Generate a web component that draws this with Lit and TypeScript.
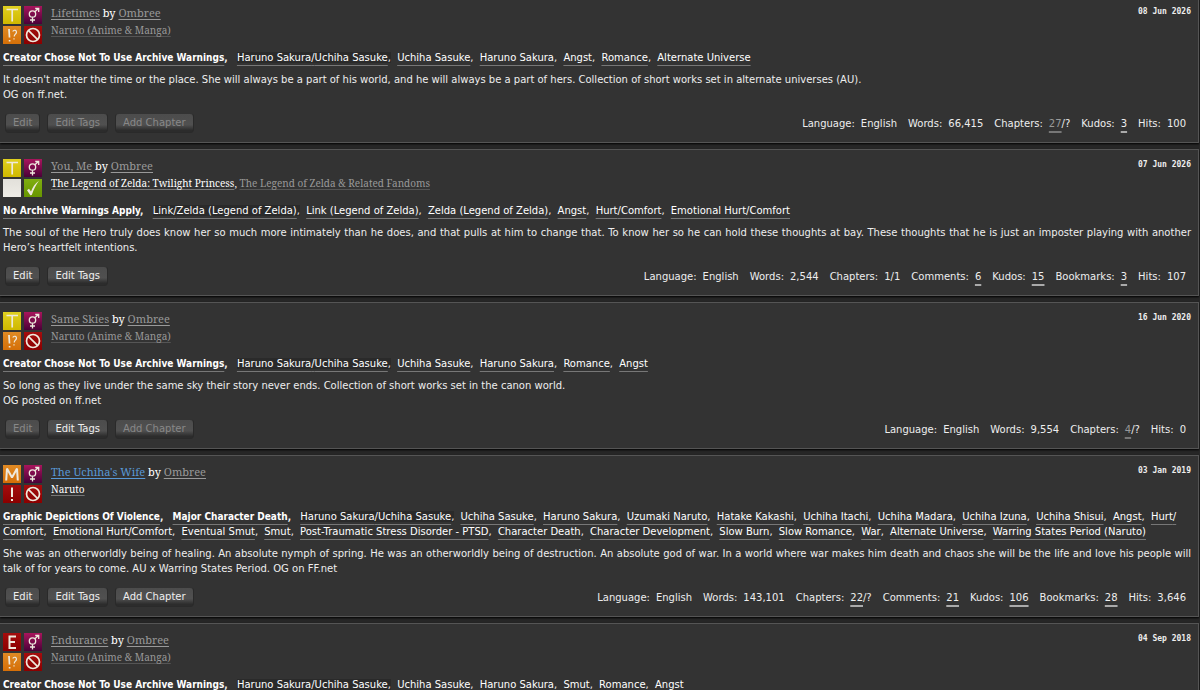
import { LitElement, html, svg, css, nothing } from 'lit';
import { customElement, property } from 'lit/decorators.js';
import { classMap } from 'lit/directives/class-map.js';

type Symbol = 'teen' | 'mature' | 'explicit' | 'het' | 'choose' | 'warn' | 'none' | 'wip' | 'done';

interface Link {
  text: string;
  fresh?: boolean;
}

interface Work {
  title: string;
  active?: boolean;
  date: string;
  symbols: Symbol[];
  fandoms: Link[];
  warnings: string[];
  pairings: string[];
  tags: string[];
  summary: string[];
  actions: Link[];
  stats: { label: string; value: string; link?: string; seen?: boolean }[];
}

const SASUSAKU = 'Haruno Sakura/Uchiha Sasuke';

const works: Work[] = [
  {
    title: 'Lifetimes',
    date: '08 Jun 2026',
    symbols: ['teen', 'het', 'choose', 'wip'],
    fandoms: [{ text: 'Naruto (Anime & Manga)' }],
    warnings: ['Creator Chose Not To Use Archive Warnings'],
    pairings: [SASUSAKU],
    tags: ['Uchiha Sasuke', 'Haruno Sakura', 'Angst', 'Romance', 'Alternate Universe'],
    summary: [
      "It doesn't matter the time or the place. She will always be a part of his world, and he will always be a part of hers. Collection of short works set in alternate universes (AU).",
      'OG on ff.net.',
    ],
    actions: [{ text: 'Edit' }, { text: 'Edit Tags' }, { text: 'Add Chapter' }],
    stats: [
      { label: 'Language', value: 'English' },
      { label: 'Words', value: '66,415' },
      { label: 'Chapters', link: '27', value: '/?', seen: true },
      { label: 'Kudos', link: '3', value: '' },
      { label: 'Hits', value: '100' },
    ],
  },
  {
    title: 'You, Me',
    date: '07 Jun 2026',
    symbols: ['teen', 'het', 'none', 'done'],
    fandoms: [
      { text: 'The Legend of Zelda: Twilight Princess', fresh: true },
      { text: 'The Legend of Zelda & Related Fandoms' },
    ],
    warnings: ['No Archive Warnings Apply'],
    pairings: ['Link/Zelda (Legend of Zelda)'],
    tags: ['Link (Legend of Zelda)', 'Zelda (Legend of Zelda)', 'Angst', 'Hurt/Comfort', 'Emotional Hurt/Comfort'],
    summary: [
      'The soul of the Hero truly does know her so much more intimately than he does, and that pulls at him to change that. To know her so he can hold these thoughts at bay. These thoughts that he is just an imposter playing with another Hero’s heartfelt intentions.',
    ],
    actions: [{ text: 'Edit', fresh: true }, { text: 'Edit Tags', fresh: true }],
    stats: [
      { label: 'Language', value: 'English' },
      { label: 'Words', value: '2,544' },
      { label: 'Chapters', value: '1/1' },
      { label: 'Comments', link: '6', value: '' },
      { label: 'Kudos', link: '15', value: '' },
      { label: 'Bookmarks', link: '3', value: '' },
      { label: 'Hits', value: '107' },
    ],
  },
  {
    title: 'Same Skies',
    date: '16 Jun 2020',
    symbols: ['teen', 'het', 'choose', 'wip'],
    fandoms: [{ text: 'Naruto (Anime & Manga)' }],
    warnings: ['Creator Chose Not To Use Archive Warnings'],
    pairings: [SASUSAKU],
    tags: ['Uchiha Sasuke', 'Haruno Sakura', 'Romance', 'Angst'],
    summary: [
      'So long as they live under the same sky their story never ends. Collection of short works set in the canon world.',
      'OG posted on ff.net',
    ],
    actions: [{ text: 'Edit' }, { text: 'Edit Tags', fresh: true }, { text: 'Add Chapter' }],
    stats: [
      { label: 'Language', value: 'English' },
      { label: 'Words', value: '9,554' },
      { label: 'Chapters', link: '4', value: '/?', seen: true },
      { label: 'Hits', value: '0' },
    ],
  },
  {
    title: "The Uchiha's Wife",
    active: true,
    date: '03 Jan 2019',
    symbols: ['mature', 'het', 'warn', 'wip'],
    fandoms: [{ text: 'Naruto', fresh: true }],
    warnings: ['Graphic Depictions Of Violence', 'Major Character Death'],
    pairings: [SASUSAKU],
    tags: [
      'Uchiha Sasuke', 'Haruno Sakura', 'Uzumaki Naruto', 'Hatake Kakashi', 'Uchiha Itachi', 'Uchiha Madara',
      'Uchiha Izuna', 'Uchiha Shisui', 'Angst', 'Hurt/Comfort', 'Emotional Hurt/Comfort', 'Eventual Smut', 'Smut',
      'Post-Traumatic Stress Disorder - PTSD', 'Character Death', 'Character Development', 'Slow Burn',
      'Slow Romance', 'War', 'Alternate Universe', 'Warring States Period (Naruto)',
    ],
    summary: [
      'She was an otherworldly being of healing. An absolute nymph of spring. He was an otherworldly being of destruction. An absolute god of war. In a world where war makes him death and chaos she will be the life and love his people will talk of for years to come. AU x Warring States Period. OG on FF.net',
    ],
    actions: [
      { text: 'Edit', fresh: true },
      { text: 'Edit Tags', fresh: true },
      { text: 'Add Chapter', fresh: true },
    ],
    stats: [
      { label: 'Language', value: 'English' },
      { label: 'Words', value: '143,101' },
      { label: 'Chapters', link: '22', value: '/?' },
      { label: 'Comments', link: '21', value: '' },
      { label: 'Kudos', link: '106', value: '' },
      { label: 'Bookmarks', link: '28', value: '' },
      { label: 'Hits', value: '3,646' },
    ],
  },
  {
    title: 'Endurance',
    date: '04 Sep 2018',
    symbols: ['explicit', 'het', 'choose', 'wip'],
    fandoms: [{ text: 'Naruto (Anime & Manga)' }],
    warnings: ['Creator Chose Not To Use Archive Warnings'],
    pairings: [SASUSAKU],
    tags: ['Uchiha Sasuke', 'Haruno Sakura', 'Smut', 'Romance', 'Angst'],
    summary: [],
    actions: [],
    stats: [],
  },
];

const glyphs: Record<Symbol, { label: string; art: unknown }> = {
  teen: { label: 'Teen And Up Audiences', art: svg`<path d="M3.5 3.5h11.500M9.200 3.500v12"/>` },
  mature: {
    label: 'Mature',
    art: svg`<path stroke-width="2" stroke-linejoin="bevel" d="M3.200 15.500 4 3.500 9 12.500 14 3.500 14.800 15.500"/>`,
  },
  explicit: { label: 'Explicit', art: svg`<path stroke-width="2" d="M13 3.500H6.500V15H13M6.500 9H12"/>` },
  het: {
    label: 'F/M',
    art: svg`<g stroke-width="1.300"><circle cx="8.500" cy="8" r="3.200"/><path d="M8.500 11.200V16.500M6 14h5M10.800 5.700 14.500 2.500M11.200 2.500h3.500v3.500"/></g>`,
  },
  choose: {
    label: 'Choose Not To Use Archive Warnings',
    art: svg`<path d="M6 3 6.500 11.500"/><path d="M6.600 14v1.500"/><path stroke-width="1.200" d="M9.800 5.500C10.500 3.500 14 4 13.400 6.500 13 8.200 11.300 8.300 11.200 10.500M11 12.200v1.300"/>`,
  },
  warn: { label: 'Archive Warning', art: svg`<path stroke-width="2" d="M9 2.500v9.500"/><path stroke-width="2" d="M9 14v2"/>` },
  none: { label: 'No category of warning', art: nothing },
  wip: {
    label: 'Work in Progress',
    art: svg`<circle cx="9" cy="9" r="6.500"/><path d="M4.600 4.600 13.400 13.400"/>`,
  },
  done: {
    label: 'Complete Work',
    art: svg`<path fill="#eee9dd" stroke="none" d="M3 11.200 5 9.800 7 12.500C8.500 8.500 11 4.500 15 1.800 12.200 5.500 9.500 10.500 7.800 16L6.300 16.200Z"/>`,
  },
};

@customElement('work-symbols')
class WorkSymbols extends LitElement {
  @property({ attribute: false }) symbols: Symbol[] = [];

  static styles = css`
    :host {
      display: grid;
      grid-template-columns: 18px 18px;
      grid-auto-rows: 18px;
      gap: 2px 3px;
    }
    .tile { display: block; }
    .tile svg {
      display: block;
      width: 18px;
      height: 18px;
      fill: none;
      stroke: #eee9dd;
      stroke-width: 1.7;
    }
    .teen { background: linear-gradient(#e0d020, #cfb800); }
    .mature, .choose { background: linear-gradient(#e08a24, #d56f08); }
    .explicit, .warn, .wip { background: linear-gradient(#a40d0d, #8b0000); }
    .het { background: linear-gradient(#a8155c, #4a0038); }
    .none { background: linear-gradient(#e2e0da, #eeece6); }
    .done { background: linear-gradient(#7fae10, #689600); }
  `;

  render() {
    return this.symbols.map(
      (s) => html`<span class="tile ${s}" role="img" aria-label=${glyphs[s].label}>
        <svg viewBox="0 0 18 18" aria-hidden="true">${glyphs[s].art}</svg>
      </span>`,
    );
  }
}

@customElement('work-blurb')
class WorkBlurb extends LitElement {
  @property({ attribute: false }) work!: Work;

  static styles = css`
    :host { display: block; }
    .card {
      padding: 9px 7px 9px 3px;
      background: #333;
      border: 1px solid #555;
      border-left: 0;
      box-shadow: 0 1px 2px #000;
    }
    a {
      color: #eee;
      text-decoration: underline 1px;
      text-decoration-skip-ink: none;
      text-underline-offset: 2px;
    }
    .header {
      display: flex;
      align-items: flex-start;
      gap: 9px;
    }
    .heading { flex: 1; font-family: 'Noto Serif', Georgia, serif; }
    h4, h5, p, ul, dl, dd { margin: 0; padding: 0; font-weight: normal; }
    h4 { font-size: 11px; line-height: 13px; color: #fff; }
    h4 a { color: #999; }
    h4 .active { color: #5998d6; }
    h5 { margin-top: 4px; font-size: 10px; line-height: 14px; color: #eee; }
    h5 a { color: #999; text-decoration-color: #555; }
    h5 .fresh { color: #fff; text-decoration-color: #777; }
    .date {
      margin-top: 1px;
      font: bold 8px/10px 'DejaVu Sans Mono', monospace;
      color: #eee;
    }
    .tags { margin-top: 6px; }
    .tags li {
      display: inline;
      margin-right: 3px;
    }
    .tags li.warning { margin-right: 6px; }
    .tags a { color: #fff; text-decoration-color: #777; text-underline-offset: 4px; }
    .tags .warning { font-family: 'DejaVu Sans Condensed', 'Open Sans', sans-serif; font-weight: bold; }
    .tags .pairing { background: #2a2a2a; }
    .summary { margin-top: 7px; text-align: justify; }
    .footer {
      display: flex;
      flex-wrap: wrap;
      justify-content: space-between;
      align-items: center;
      gap: 7px;
      margin-top: 11px;
      padding: 0 5px 0 2px;
    }
    .actions, .stats { display: flex; flex-wrap: wrap; }
    .actions { gap: 7px; }
    button {
      height: 20px;
      padding: 0 7px;
      border: 1px solid #2a2a2a;
      border-top-color: #333;
      border-radius: 4px;
      background: linear-gradient(#4c4c4c, #505050 60%, #2c2c2c 90%);
      font: inherit;
      line-height: 16px;
      color: #888;
    }
    button.fresh { color: #eee; }
    .stats { gap: 11px; margin-left: auto; }
    .stat { display: flex; gap: 6px; }
    .stat a { text-decoration: underline 2px #aaa; text-underline-offset: 4px; }
    .stat .seen { color: #999; text-decoration-color: #777; }
  `;

  private tag(text: string, kind: string, last: boolean) {
    const parts = text.split('/');
    const label = parts.map((p, i) => (i ? html`/<wbr />${p}` : p));
    return html`<li class=${kind}><a class=${kind} href="#">${label}</a>${last ? '' : ','}</li> `;
  }

  render() {
    const w = this.work;
    const tags = [
      ...w.warnings.map((text) => ({ text, kind: 'warning' })),
      ...w.pairings.map((text) => ({ text, kind: 'pairing' })),
      ...w.tags.map((text) => ({ text, kind: 'freeform' })),
    ];
    return html`
      <article class="card">
        <div class="header">
          <work-symbols .symbols=${w.symbols}></work-symbols>
          <div class="heading">
            <h4><a href="#" class=${classMap({ active: !!w.active })}>${w.title}</a> by <a href="#">Ombree</a></h4>
            <h5>
              ${w.fandoms.map((f, i) => html`${i ? ', ' : ''}<a href="#" class=${classMap({ fresh: !!f.fresh })}>${f.text}</a>`)}
            </h5>
          </div>
          <time class="date">${w.date}</time>
        </div>
        <ul class="tags">${tags.map((t, i) => this.tag(t.text, t.kind, i === tags.length - 1))}</ul>
        ${w.summary.length
          ? html`<div class="summary">${w.summary.map((line) => html`<p>${line}</p>`)}</div>`
          : nothing}
        ${w.stats.length
          ? html`<div class="footer">
              <div class="actions">
                ${w.actions.map((a) => html`<button type="button" class=${classMap({ fresh: !!a.fresh })}>${a.text}</button>`)}
              </div>
              <dl class="stats">
                ${w.stats.map(
                  (s) => html`<div class="stat">
                    <dt>${s.label}:</dt>
                    <dd>${s.link ? html`<a href="#" class=${classMap({ seen: !!s.seen })}>${s.link}</a>` : nothing}${s.value}</dd>
                  </div>`,
                )}
              </dl>
            </div>`
          : nothing}
      </article>
    `;
  }
}

@customElement('app-root')
class AppRoot extends LitElement {
  static styles = css`
    :host {
      display: block;
      height: 100vh;
      overflow: hidden;
      background: #272727;
      font: 10px/15px 'DejaVu Sans', 'Lucida Sans', sans-serif;
      color: #eee;
    }
    .list {
      display: flex;
      flex-direction: column;
      gap: 6px;
      margin: -4px 1px 0 0;
    }
  `;

  render() {
    return html`<main class="list">${works.map((w) => html`<work-blurb .work=${w}></work-blurb>`)}</main>`;
  }
}
